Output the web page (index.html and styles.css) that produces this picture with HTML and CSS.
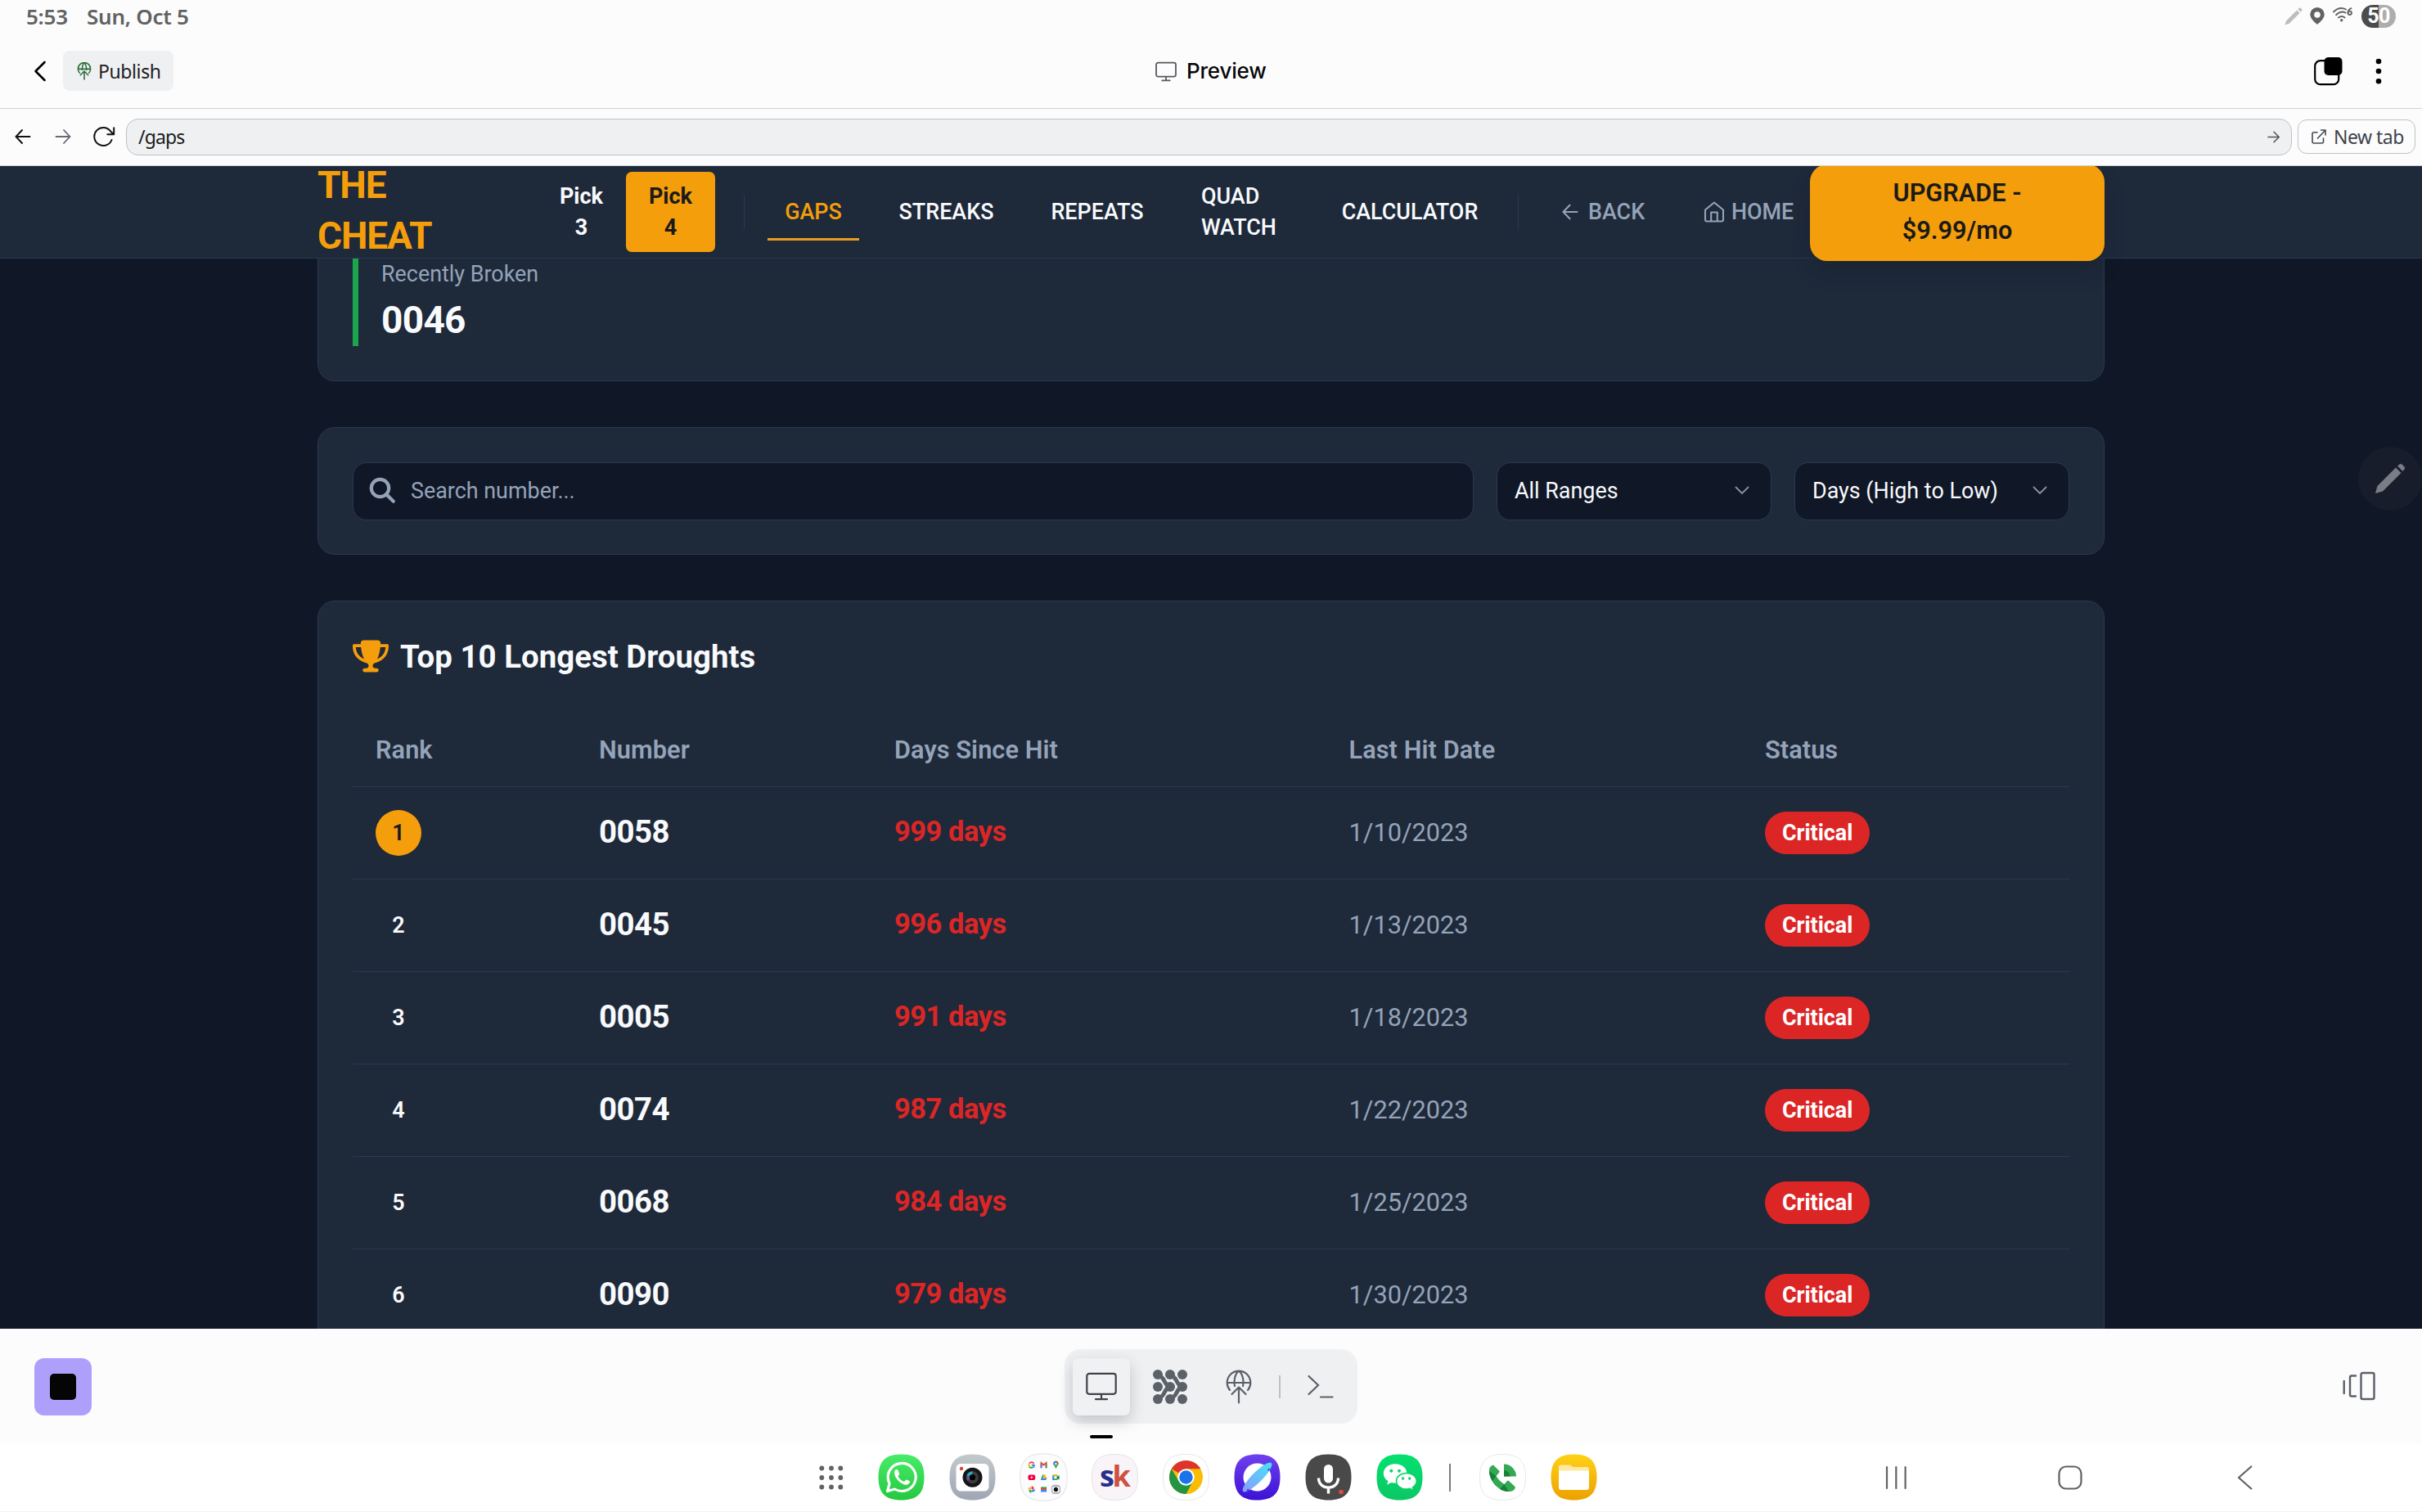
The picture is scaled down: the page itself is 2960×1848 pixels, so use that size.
FILE: index.html
```html
<!DOCTYPE html>
<html lang="en">
<head>
<meta charset="utf-8">
<title>Preview</title>
<link rel="stylesheet" href="styles.css">
</head>
<body>
<div class="screen">
  <div class="browser">
    <div class="status">
      <span class="clock">5:53</span><span class="date">Sun, Oct 5</span>
      <span class="grow"></span>
      <svg class="s-pen" width="22" height="22" viewBox="0 0 22 22"><path d="M0.500 21.500L2 16.500L15 3.500L18.500 7L5.500 20ZM16.300 2.300L18 .7Q19 0 20 1L21 2Q22 3 21 4L19.700 5.700Z" fill="#bdbdbd"/></svg>
      <svg class="s-pin" width="18" height="22" viewBox="0 0 18 22"><path fill-rule="evenodd" d="M9 0a8.700 8.700 0 0 1 8.700 8.600C17.700 14 12 18.500 9 21 6 18.500.3 14 .3 8.600A8.700 8.700 0 0 1 9 0Zm0 5.200a3.800 3.800 0 1 0 0 7.600 3.800 3.800 0 0 0 0-7.600Z" fill="#626262"/></svg>
      <svg class="s-wifi" width="25" height="18" viewBox="0 0 25 18"><g fill="none" stroke="#626262" stroke-width="1.900" stroke-linecap="round"><path d="M1 5.500Q8 -1.500 16 2.500M4 9.200Q10 3.700 15.500 6.500M7 12.500Q11 9.500 14.500 12.500"/><path d="M22.500 1.200Q18.500 3 18.500 6.500"/><circle cx="20.700" cy="6.800" r="2.200"/></g><circle cx="10.700" cy="15.800" r="1.700" fill="#626262"/></svg>
      <span class="battery">50</span>
    </div>
    <div class="titlebar">
      <svg class="back" width="16" height="26" viewBox="0 0 16 26"><path d="M13.500 2L2.500 13L13.500 24" fill="none" stroke="#000" stroke-width="2.600" stroke-linecap="round" stroke-linejoin="round"/></svg>
      <div class="publish">
        <svg width="18" height="22" viewBox="0 0 32 42"><g fill="none" stroke="#2e6e3b" stroke-width="3" stroke-linecap="round" stroke-linejoin="round"><path d="M5 25a14.500 14.500 0 1 1 22 0M2 16h28M11 18c0-8 2-14 5-16 3 2 5 8 5 16M16 22v18M7 30l9-9 9 9"/></g></svg>
        <span>Publish</span>
      </div>
      <div class="heading">
        <svg width="26" height="25" viewBox="0 0 38 35"><g fill="none" stroke="#55575e" stroke-width="2.600" stroke-linecap="round"><rect x="1.500" y="1.500" width="35" height="25" rx="3.500"/><path d="M19 27v6M12 33.500h14"/></g></svg>
        <span>Preview</span>
      </div>
      <span class="grow"></span>
      <svg class="tabs" width="36" height="36" viewBox="0 0 36 36"><rect x="2.200" y="5.200" width="29" height="29" rx="6.500" fill="none" stroke="#000" stroke-width="2.200"/><rect x="13.500" y="1" width="22" height="22" rx="5" fill="#000"/></svg>
      <svg class="kebab" width="8" height="32" viewBox="0 0 8 32"><circle cx="4" cy="4" r="3.300"/><circle cx="4" cy="16" r="3.300"/><circle cx="4" cy="28.300" r="3.300"/></svg>
    </div>
    <div class="address">
      <svg class="a-prev" width="20" height="20" viewBox="0 0 20 20"><path d="M18.500 10H1.800M9 2L1.500 10L9 18" fill="none" stroke="#111" stroke-width="1.900" stroke-linecap="round"/></svg>
      <svg class="a-next" width="20" height="20" viewBox="0 0 20 20"><path d="M1.500 10H18.200M11 2L18.500 10L11 18" fill="none" stroke="#666a70" stroke-width="1.800" stroke-linecap="round"/></svg>
      <svg class="a-reload" width="28" height="26" viewBox="0 0 28 26"><path d="M23.500 17A11 11 0 1 1 22.500 7L26 10M26.200 2.200V10.200H18.300" fill="none" stroke="#111" stroke-width="2" stroke-linecap="round" stroke-linejoin="round"/></svg>
      <div class="url"><span>/gaps</span><svg width="15" height="15" viewBox="0 0 15 15"><path d="M1 7.500H14M8 1.200L14.200 7.500L8 13.800" fill="none" stroke="#50545a" stroke-width="1.500" stroke-linecap="round"/></svg></div>
      <div class="newtab"><svg width="18" height="18" viewBox="0 0 18 18"><path d="M7 3.800H3Q1 3.800 1 5.800V15Q1 17 3 17H12.500Q14.500 17 14.500 15V11M7.500 11L17 1M11.500 1H17V7" fill="none" stroke="#444850" stroke-width="1.600" stroke-linecap="round" stroke-linejoin="round"/></svg><span>New tab</span></div>
    </div>
  </div>

  <div class="page">
    <nav class="nav">
      <div class="nav-inner">
        <div class="logo">THE CHEAT</div>
        <div class="pick">Pick 3</div>
        <div class="pick pick-on">Pick 4</div>
        <i class="rule"></i>
        <a class="link on">GAPS</a>
        <a class="link streaks">STREAKS</a>
        <a class="link repeats">REPEATS</a>
        <a class="link quad">QUAD WATCH</a>
        <a class="link calc">CALCULATOR</a>
        <i class="rule rule-2"></i>
        <a class="mute back-link"><svg width="20" height="20" viewBox="0 0 20 20"><path d="M18.500 10H2M9.500 1.700L1.500 10L9.500 18.300" fill="none" stroke="#94a3b8" stroke-width="2.100" stroke-linecap="round" stroke-linejoin="round"/></svg>BACK</a>
        <a class="mute home-link"><svg width="26" height="26" viewBox="0 0 26 26"><path d="M2 10.500L13 1.500L24 10.500V22.500Q24 24.500 22 24.500H4Q2 24.500 2 22.500ZM9.200 24.500V13.500H16.800V24.500" fill="none" stroke="#94a3b8" stroke-width="2.100" stroke-linejoin="round"/></svg>HOME</a>
        <div class="upgrade">UPGRADE -<br>$9.99/mo</div>
      </div>
    </nav>
    <main class="main">
      <section class="card broken">
        <div class="stat"><div class="stat-label">Recently Broken</div><div class="stat-value">0046</div></div>
      </section>
      <section class="card filters">
        <div class="field search"><svg width="33" height="33" viewBox="0 0 33 33"><g fill="none" stroke="#94a3b8" stroke-width="4.200" stroke-linecap="round"><circle cx="13.500" cy="13.500" r="10.700"/><path d="M21.500 21.500L29.800 29.800"/></g></svg><span>Search number...</span></div>
        <div class="field select"><span class="ranges">All Ranges</span><svg width="18" height="11" viewBox="0 0 18 11"><path d="M1.500 1.500L9 9L16.500 1.500" fill="none" stroke="#8d929e" stroke-width="1.800" stroke-linecap="round"/></svg></div>
        <div class="field select"><span class="days-sort">Days (High to Low)</span><svg width="18" height="11" viewBox="0 0 18 11"><path d="M1.500 1.500L9 9L16.500 1.500" fill="none" stroke="#8d929e" stroke-width="1.800" stroke-linecap="round"/></svg></div>
      </section>
      <section class="card droughts">
        <h2><svg width="44" height="40" viewBox="0 0 576 512"><path fill="#f59e0b" d="M400 0H176c-26.500 0-48.100 21.800-47.100 48.200.2 5.300.4 10.600.7 15.800H24C10.700 64 0 74.700 0 88c0 92.600 33.500 157 78.500 200.700 44.300 43.100 98.300 64.800 138.100 75.800 23.400 6.500 39.400 26 39.400 45.600 0 20.900-17 37.900-37.900 37.900H192c-17.700 0-32 14.300-32 32s14.300 32 32 32h192c17.700 0 32-14.300 32-32s-14.300-32-32-32h-26.100c-20.900 0-37.900-17-37.900-37.900 0-19.600 15.900-39.200 39.400-45.600 39.900-11 93.900-32.700 138.200-75.800C542.500 245 576 180.600 576 88c0-13.300-10.700-24-24-24H446.400c.3-5.200.5-10.400.7-15.800C448.100 21.800 426.500 0 400 0zM48.900 112h84.400c9.100 90.100 29.200 150.300 51.900 190.600-24.900-11-50.800-26.500-73.200-48.300-32-31.100-58-76-63-142.300zm415.200 142.300c-22.400 21.800-48.300 37.300-73.200 48.300 22.700-40.300 42.800-100.500 51.900-190.600h84.400c-5.100 66.300-31.100 111.200-63 142.300z"/></svg><span>Top 10 Longest Droughts</span></h2>
        <div class="row head"><span>Rank</span><span>Number</span><span>Days Since Hit</span><span>Last Hit Date</span><span>Status</span></div>
        <div class="row"><span><b class="rank first">1</b></span><span class="num">0058</span><span class="days">999 days</span><span class="hit">1/10/2023</span><span><b class="pill">Critical</b></span></div>
        <div class="row"><span><b class="rank">2</b></span><span class="num">0045</span><span class="days">996 days</span><span class="hit">1/13/2023</span><span><b class="pill">Critical</b></span></div>
        <div class="row"><span><b class="rank">3</b></span><span class="num">0005</span><span class="days">991 days</span><span class="hit">1/18/2023</span><span><b class="pill">Critical</b></span></div>
        <div class="row"><span><b class="rank">4</b></span><span class="num">0074</span><span class="days">987 days</span><span class="hit">1/22/2023</span><span><b class="pill">Critical</b></span></div>
        <div class="row"><span><b class="rank">5</b></span><span class="num">0068</span><span class="days">984 days</span><span class="hit">1/25/2023</span><span><b class="pill">Critical</b></span></div>
        <div class="row"><span><b class="rank">6</b></span><span class="num">0090</span><span class="days">979 days</span><span class="hit">1/30/2023</span><span><b class="pill">Critical</b></span></div>
      </section>
    </main>
  </div>

  <div class="toolbar">
    <div class="stop"><i></i></div>
    <div class="tools">
      <div class="tool active"><svg width="38" height="35" viewBox="0 0 38 35"><g fill="none" stroke="#3f4249" stroke-width="2.200" stroke-linecap="round"><rect x="1.300" y="1.800" width="35.400" height="25" rx="3"/><path d="M19 27v6M12 33.200h14"/></g></svg></div>
      <div class="tool"><svg width="42" height="42" viewBox="0 0 42 42"><g fill="#5c6068"><circle cx="6" cy="6" r="6"/><circle cx="21" cy="6" r="6"/><circle cx="36" cy="6" r="6"/><circle cx="6" cy="21" r="6"/><circle cx="21" cy="21" r="6"/><circle cx="36" cy="21" r="6"/><circle cx="6" cy="36" r="6"/><circle cx="21" cy="36" r="6"/><circle cx="36" cy="36" r="6"/></g><path d="M8 8C15 9 13 19 21 21C13 23 15 33 8 34M23 8C30 9 28 19 36 21C28 23 30 33 23 34" fill="none" stroke="#5c6068" stroke-width="5"/></svg></div>
      <div class="tool"><svg width="32" height="42" viewBox="0 0 32 42"><g fill="none" stroke="#5c6068" stroke-width="2.200" stroke-linecap="round" stroke-linejoin="round"><path d="M5 25a14.300 14.300 0 1 1 22 0M2 16h28M11 20c-1.500-8 1-16 5-18.300 4 2.300 6.500 10.300 5 18.300M16 21.500v19M7.500 30l8.500-8.500 8.500 8.500"/></g></svg></div>
      <i class="tool-rule"></i>
      <div class="tool"><svg width="32" height="30" viewBox="0 0 32 30"><path d="M1.500 2L13 13L1.500 24M16 27.500H30.500" fill="none" stroke="#5c6068" stroke-width="2.200" stroke-linecap="round"/></svg></div>
      <i class="indicator"></i>
    </div>
    <svg class="flip" width="40" height="36" viewBox="0 0 40 36"><g fill="none" stroke="#5c6068" stroke-width="2.400" stroke-linecap="round" stroke-linejoin="round"><path d="M1.700 12v15M16 5.500H11Q9 5.500 9 7.500V28.500Q9 30.500 11 30.500H16"/><rect x="22.500" y="2" width="16" height="32" rx="2"/></g></svg>
  </div>

  <div class="taskbar">
    <svg class="apps" width="30" height="30" viewBox="0 0 30 30"><g fill="#626262"><circle cx="3.300" cy="3.500" r="2.900"/><circle cx="15" cy="3.500" r="2.900"/><circle cx="26.300" cy="3.500" r="2.900"/><circle cx="3.300" cy="15" r="2.900"/><circle cx="15" cy="15" r="2.900"/><circle cx="26.300" cy="15" r="2.900"/><circle cx="3.300" cy="26.500" r="2.900"/><circle cx="15" cy="26.500" r="2.900"/><circle cx="26.300" cy="26.500" r="2.900"/></g></svg>
    <svg class="app" viewBox="0 0 57 57">
      <defs>
        <path id="sq" d="M28.500.5C48 .5 56.500 9 56.500 28.500S48 56.500 28.500 56.500.5 48 .5 28.500 9 .5 28.500.5Z"/>
        <linearGradient id="wa" x2="0" y2="1"><stop stop-color="#48ec69"/><stop offset="1" stop-color="#26c83f"/></linearGradient>
        <linearGradient id="cam" x2="0" y2="1"><stop stop-color="#c3cacc"/><stop offset="1" stop-color="#9fa5b4"/></linearGradient>
        <linearGradient id="net" x2="0" y2="1"><stop stop-color="#7040ee"/><stop offset="1" stop-color="#3b12d6"/></linearGradient>
        <linearGradient id="ring" x1="1" y1=".5" x2="0" y2=".5"><stop stop-color="#43e3f4"/><stop offset="1" stop-color="#8d9bff"/></linearGradient>
        <linearGradient id="wc" x2="0" y2="1"><stop stop-color="#04e170"/><stop offset="1" stop-color="#0bc765"/></linearGradient>
        <linearGradient id="fil" x2="0" y2="1"><stop stop-color="#ffd118"/><stop offset="1" stop-color="#eca100"/></linearGradient>
      </defs>
      <use href="#sq" fill="url(#wa)"/><path d="M11.500 45.500L14.100 36.200A17 17 0 1 1 20.500 43Z" fill="none" stroke="#fff" stroke-width="3.200" stroke-linejoin="round"/><path d="M20.500 20.500C22 18.500 24 18.800 24.600 20.200L26.200 24.200C26.500 25.500 24.500 26.300 24.500 27.300C26 30.500 28.500 32.500 31.500 33.800C32.700 34 33.800 31.300 35 31.500L38.800 33.300C39.800 34.500 37.500 37.500 35.500 37.800C29.500 38.500 18 29 20.500 20.500Z" fill="#fff"/></svg>
    <svg class="app" viewBox="0 0 57 57"><use href="#sq" fill="url(#cam)"/><rect x="8.500" y="12" width="40" height="33.500" rx="5.500" fill="#fff"/><circle cx="15" cy="18" r="2.200" fill="#e53b35"/><circle cx="28.500" cy="28.700" r="12" fill="#161616"/><circle cx="28.500" cy="28.700" r="7.500" fill="#3d3b42"/><path d="M28.500 28.700L21.500 26.500A7.500 7.500 0 0 1 28.500 21.200Z" fill="#31a5ba"/><path d="M28.500 28.700L22.500 33A7.500 7.500 0 0 1 21.500 26.500Z" fill="#64549d"/><circle cx="28.500" cy="28.700" r="3.600" fill="#000"/></svg>
    <svg class="app folder" viewBox="0 0 57 57"><use href="#sq" fill="#fcfcff" stroke="#e3e3e8"/>
      <g fill="none" stroke-width="1.800"><path d="M16.800 12.200A3 3 0 0 0 11.600 12.200" stroke="#e94335"/><path d="M11.600 12.200A3.200 3.200 0 0 0 11.600 16" stroke="#fbbc04"/><path d="M11.600 16A3 3 0 0 0 16 16.500" stroke="#34a853"/><path d="M14.200 14.200H17.300Q17.300 16 16 16.700" stroke="#4285f4"/><path d="M25.600 17.500V11.500L28.500 14L31.500 11.500V17.500" stroke="#e94335"/><path d="M25.600 17.500V13" stroke="#4285f4"/><path d="M31.500 17.500V13" stroke="#34a853"/></g>
      <path d="M43 18.500Q42 15.500 40 13.500A3.200 3.200 0 1 1 46 13.500Q44 15.500 43 18.500Z" fill="#34a853"/><path d="M40 13.500A3.200 3.200 0 0 1 43 9.500V13Z" fill="#4285f4"/><path d="M43 9.500A3.200 3.200 0 0 1 46 12L43 13Z" fill="#e94335"/><circle cx="43" cy="12.700" r="1.100" fill="#fff"/>
      <rect x="10" y="25.500" width="8.500" height="6.500" rx="2" fill="#f4003c"/><path d="M13.300 27.200L16 28.700L13.300 30.200Z" fill="#fff"/>
      <path d="M27 25.500H30L26.500 32H25Z" fill="#34a853"/><path d="M27.500 25.500H30L32.500 30H29.500Z" fill="#fbbc04"/><path d="M26 29.800H32.500L31 32H25.500Z" fill="#4285f4"/>
      <rect x="39" y="25.500" width="6" height="6.500" rx="1" fill="#34a853"/><path d="M39 27.500L41 25.500H45V27.500Z" fill="#fbbc04"/><path d="M39 27.500H41V32H39Z" fill="#4285f4"/><path d="M44 28.500L47 26V31.500L44 30Z" fill="#188038"/><rect x="41" y="27.500" width="3" height="2.700" fill="#fff"/>
      <path d="M14 39Q17 39 17 42.500H14Z" fill="#e94335"/><path d="M18.500 43Q18.500 46 14.500 46V43Z" fill="#4285f4"/><path d="M14 47Q11 47 11 43.500H14Z" fill="#34a853"/><path d="M10 43Q10 40 13.500 40.500V43Z" fill="#fbbc04"/>
      <path d="M25.200 40H32V42H25.200Z" fill="#34a853"/><path d="M25.200 41.500H32V43.500H25.200Z" fill="#e94335"/><path d="M25.200 43.300H32V46H25.200Z" fill="#4285f4"/>
      <rect x="37.500" y="37.500" width="11" height="11" rx="4" fill="#b0b5bd"/><rect x="39" y="39.800" width="8" height="6.500" rx="1" fill="#fff"/><circle cx="43" cy="43" r="2.600" fill="#111"/></svg>
    <svg class="app" viewBox="0 0 57 57"><use href="#sq" fill="#f8f4f8" stroke="#e6e2e6"/><text x="10" y="40" class="sk" fill="#292f8e">s</text><text x="25.500" y="40" class="sk" fill="#cf513f">k</text></svg>
    <svg class="app" viewBox="0 0 57 57"><use href="#sq" fill="#fff" stroke="#e8e8e8"/><circle cx="28.500" cy="28.500" r="20.500" fill="#fbbc04"/><path d="M28.500 28.500L10.750 18.250A20.500 20.500 0 0 1 46.250 18.250Z" fill="#dd352b"/><path d="M10.750 18.250A20.500 20.500 0 0 0 28.500 49L37 33.500L28.500 28.500L19.500 33Z" fill="#249343"/><path d="M28.500 18.250H46.250L37.500 33.500L28.500 49Q30 49 28.500 49L37.400 33.600Z" fill="#fbbc04"/><circle cx="28.500" cy="28.500" r="10.300" fill="#fff"/><circle cx="28.500" cy="28.500" r="8.200" fill="#1a73e8"/></svg>
    <svg class="app" viewBox="0 0 57 57"><use href="#sq" fill="url(#net)"/><circle cx="28.500" cy="28.500" r="17" fill="#fff"/><ellipse cx="28.500" cy="28.500" rx="24.500" ry="6.300" transform="rotate(-45 28.500 28.500)" fill="url(#ring)"/><path d="M41 19.500Q44.500 16 43.500 18.500L42.500 20.500ZM16.500 43.500Q13.500 46.500 18.500 44L17.500 42.500Z" fill="#3d22c5"/></svg>
    <svg class="app" viewBox="0 0 57 57"><use href="#sq" fill="#494949"/><rect x="23" y="13" width="11" height="22.500" rx="5.500" fill="#fff"/><path d="M16.500 29.500C16.500 45 40.500 45 40.500 29.500M28.500 41V48.500" fill="none" stroke="#fff" stroke-width="3.400"/><circle cx="44" cy="46.500" r="2.800" fill="#e8473e"/></svg>
    <svg class="app" viewBox="0 0 57 57"><use href="#sq" fill="url(#wc)"/><path d="M23 12.300C14.500 12.300 8.800 17.500 8.800 24C8.800 28 11 31 14.500 33.200L13 37.600L18.500 35C31 38 37.500 31 37.500 24.500C37.500 17.500 31.500 12.300 23 12.300Z" fill="#fff"/><path d="M37 23.500C29.500 23.500 24.500 28 24.500 33.300C24.500 38.500 29.500 43 36.500 43Q39 43 41 42.300L45.300 44.500L44.400 40.800C47.500 39 49.200 36.300 49.200 33.300C49.200 28 44.500 23.500 37 23.500Z" fill="#fff" stroke="#07d36a" stroke-width="1.500"/><g fill="#06d56b"><circle cx="18.300" cy="20.700" r="2"/><circle cx="28" cy="20.700" r="2"/><circle cx="32.500" cy="30" r="1.700"/><circle cx="40.700" cy="30" r="1.700"/></g></svg>
    <i class="task-rule"></i>
    <svg class="app" viewBox="0 0 57 57"><use href="#sq" fill="#fff" stroke="#e8e8e8"/><path d="M17 13.500L24.500 21Q25 22 24 23L20.500 27Q24 33 30.500 37L34 33Q35 32 36 33L44 40.500Q43 46 36 46C25 46 12 35 12 20.500Q12 15 17 13.500Z" fill="#34a853"/><path d="M12 21L20.500 27L16 33Q12 27 12 21ZM30.500 37L36 46Q29 46 25 43Z" fill="#188038"/><path d="M30 12.500A15 15 0 0 1 45 27.500H30Z" fill="#34a853"/><path d="M30 20A7.500 7.500 0 0 1 37.500 27.500H30Z" fill="#188038"/></svg>
    <svg class="app" viewBox="0 0 57 57"><use href="#sq" fill="url(#fil)"/><path d="M10 23V16Q10 13.500 12.500 13.500H24L27.500 16H44.500Q47 16 47 18.500V23Z" fill="#ffe8a0"/><path d="M10 20.500H47V41Q47 44 44 44H13Q10 44 10 41Z" fill="#fff"/></svg>
    <span class="grow"></span>
    <svg class="k-recent" width="27" height="30" viewBox="0 0 27 30"><path d="M2 2V28M13.300 2V28M24.600 2V28" stroke="#626262" stroke-width="2.200" stroke-linecap="round"/></svg>
    <svg class="k-home" width="30" height="30" viewBox="0 0 30 30"><rect x="1.500" y="1.500" width="27" height="27" rx="8.500" fill="none" stroke="#626262" stroke-width="2.200"/></svg>
    <svg class="k-back" width="19" height="30" viewBox="0 0 19 30"><path d="M17.300 1.500L2 15L17.300 28.500" fill="none" stroke="#626262" stroke-width="2.200" stroke-linecap="round" stroke-linejoin="round"/></svg>
  </div>

  <div class="float-pen"><svg width="38" height="38" viewBox="0 0 38 38"><path d="M1 37L3.500 28L26 5.500L32.500 12L10 34.500ZM28 3.500L30.500 1.500Q32 .3 33.500 1.500L36.500 4.500Q37.700 6 36.500 7.500L34.500 10Z" fill="#7a7d85"/></svg></div>
</div>
</body>
</html>
```
FILE: styles.css
```css
* { box-sizing: border-box; }
body { margin: 0; font-family: Roboto, "Liberation Sans", sans-serif; }
svg { display: block; flex: none; }
.grow { flex: 1; }
.screen { position: relative; width: 2960px; height: 1848px; overflow: hidden; display: flex; flex-direction: column; background: #fff; }

/* browser chrome */
.browser { position: relative; z-index: 3; height: 203px; flex: none; background: #fcfcfd; border-bottom: 1px solid #cbd0d4; font-family: "Noto Sans", sans-serif; }
.status { height: 42px; display: flex; align-items: center; padding: 0 32px 3px 32px; color: #626262; font: 600 26px/1 "Noto Sans", sans-serif; letter-spacing: -.25px; }
.clock { width: 74px; white-space: nowrap; }
.date { white-space: nowrap; }
.s-pen { margin-right: 9px; }
.s-pin { margin-right: 10px; }
.s-wifi { margin-right: 10px; margin-top: -4px; }
.battery { width: 42px; height: 28px; border-radius: 14px; background: linear-gradient(90deg, #4c4c4c 50%, #adadad 50%); color: #fff; font: 700 25px/27px Roboto, sans-serif; text-align: center; letter-spacing: -.5px; }
.titlebar { position: relative; height: 91px; display: flex; align-items: center; padding: 0 49px 1px 41px; border-bottom: 1px solid #d0d2d4; }
.titlebar .back { margin-right: 20px; }
.publish { width: 135px; height: 49px; border-radius: 8px; background: #eff0f2; display: flex; align-items: center; gap: 8px; padding-left: 17px; color: #1d2026; font-size: 23px; letter-spacing: -.4px; }
.heading { position: absolute; left: 1412px; top: 30px; display: flex; align-items: center; gap: 12px; font: 500 26px/30px Inter, sans-serif; color: #07080a; letter-spacing: -.2px; }
.tabs { margin-right: 40px; }
.address { height: 69px; display: flex; align-items: center; padding: 0 8px 1px 18px; }
.a-prev { margin-right: 29px; }
.a-next { margin-right: 26px; }
.a-reload { margin-right: 13px; }
.url { flex: 1; height: 45px; border: 1px solid #bec2c5; border-radius: 15px; background: #eff0f2; display: flex; align-items: center; justify-content: space-between; padding: 0 14px 0 14px; color: #1a1c20; font-size: 23px; letter-spacing: -.9px; }
.newtab { width: 144px; height: 42px; margin-left: 7px; border: 1px solid #bec2c5; border-radius: 11px; display: flex; align-items: center; gap: 9px; padding-left: 16px; color: #3f434a; font-size: 23px; white-space: nowrap; letter-spacing: -.5px; }

/* page header */
.page { height: 1421px; flex: none; background: #101727; position: relative; display: flex; flex-direction: column; }
.nav { height: 113px; flex: none; background: #1e293a; border-bottom: 1px solid #2b3950; position: relative; z-index: 2; }
.nav-inner { width: 2184px; height: 112px; margin: 0 auto; display: flex; align-items: center; }
.logo { width: 268px; padding-right: 100px; color: #f59e0b; font-size: 46px; font-weight: 700; line-height: 62px; letter-spacing: -1.150px; margin-top: -5px; }
.pick { width: 109px; height: 98px; padding: 11px 24px; text-align: center; color: #f8fafc; font-size: 27px; font-weight: 700; line-height: 38px; }
.pick-on { background: #f59e0b; border-radius: 7px; color: #1a1a1a; }
.rule { width: 1px; height: 42px; margin: 0 28px 0 35px; background: #2b3950; }
.rule-2 { margin: 0 0 0 28px; }
.link { display: block; color: #f8fafc; font-size: 26.900px; font-weight: 500; line-height: 38px; margin-right: 28px; padding: 16px 0 13px; border-bottom: 3px solid transparent; text-align: center; white-space: nowrap; height: 70px; }
.link.on { width: 112px; color: #f59e0b; border-color: #e99c22; }
.streaks { width: 157px; }
.repeats { width: 156px; }
.quad { width: 144px; padding: 1px 0 0 21px; text-align: left; white-space: normal; height: 79px; }
.calc { width: 208px; margin-right: 0; }
.mute { display: flex; align-items: center; color: #94a3b8; font-size: 26.900px; font-weight: 500; white-space: nowrap; line-height: 38px; }
.back-link { width: 172px; padding-left: 53px; gap: 12px; }
.home-link { width: 180px; padding-left: 54px; gap: 8px; }
.upgrade { width: 360px; height: 118px; margin-left: auto; margin-top: 2px; border-radius: 21px; background: #f59e0b; color: #1a1a1a; font-size: 30.700px; font-weight: 600; line-height: 46px; text-align: center; padding-top: 12px; box-shadow: 0 14px 26px -5px rgba(20, 28, 40, .45); flex: none; }

/* cards */
.main { flex: 1; overflow: hidden; width: 2184px; margin: 0 auto; }
.card { background: #1e293a; border: 1px solid #2b3950; border-radius: 21px; padding: 0 42px; }
.broken { height: 150px; border-top: 0; border-radius: 0 0 21px 21px; margin-bottom: 56px; }
.stat { height: 107px; border-left: 7px solid #1ba54c; padding-left: 28px; }
.stat-label { color: #94a3b8; font-size: 26.900px; line-height: 38px; white-space: nowrap; }
.stat-value { color: #f8fafc; font-size: 46px; font-weight: 700; line-height: 62px; margin-top: 6px; letter-spacing: -.7px; }
.filters { height: 156px; display: flex; align-items: center; gap: 28px; margin-bottom: 56px; }
.field { height: 71px; background: #101727; border: 1px solid #2b3950; border-radius: 17px; display: flex; align-items: center; font-size: 26.900px; white-space: nowrap; padding-bottom: 1px; }
.search { flex: 1; padding-left: 19px; gap: 18px; color: #94a3b8; }
.select { width: 336px; padding-left: 21px; padding-right: 26px; justify-content: space-between; color: #f8fafc; }
.droughts { height: 1400px; }
.droughts h2 { margin: 0; height: 135px; padding-bottom: 1px; display: flex; align-items: center; gap: 14px; color: #f8fafc; font-size: 38.400px; font-weight: 700; white-space: nowrap; letter-spacing: .03px; }
.row { height: 113px; border-bottom: 1px solid #2b3950; display: grid; grid-template-columns: 273px 361px 555.500px 508.500px 1fr; align-items: center; }
.row > span { padding-left: 28px; white-space: nowrap; }
.head { height: 92px; color: #94a3b8; font-size: 30.700px; font-weight: 600; letter-spacing: .08px; }
.head > span { padding-top: 2px; }
.rank { width: 56px; height: 56px; border-radius: 50%; display: flex; align-items: center; justify-content: center; color: #f8fafc; font-size: 26.900px; font-weight: 600; }
.first { background: #f59e0b; color: #1a1a1a; }
.row > .num { color: #f8fafc; font-size: 38.400px; font-weight: 700; letter-spacing: -.5px; padding-bottom: 3px; }
.row > .days { color: #dc2626; font-size: 34.500px; font-weight: 700; letter-spacing: -.5px; padding-bottom: 4px; }
.row > .hit { color: #94a3b8; font-size: 30.700px; padding-bottom: 2px; }
.pill { display: inline-block; height: 52px; border-radius: 26px; background: #dc2626; color: #fff; font-size: 26.900px; font-weight: 700; line-height: 52px; padding: 0 21px; }
.row > span:last-child { display: flex; }

/* editor toolbar */
.toolbar { height: 140px; flex: none; background: #fcfcfd; display: flex; align-items: center; justify-content: space-between; padding: 0 57px 0 42px; }
.stop { width: 70px; height: 70px; border-radius: 12px; background: #ae9ffb; display: flex; align-items: center; justify-content: center; margin-top: 2px; }
.stop i { width: 32px; height: 32px; border-radius: 5px; background: #050505; }
.tools { position: relative; width: 358px; height: 91px; border-radius: 20px; background: #eff0f2; display: flex; align-items: center; padding-left: 10px; margin-right: 16px; margin-top: 1px; }
.tool { flex: none; width: 70px; height: 70px; margin-right: 14px; display: flex; align-items: center; justify-content: center; }
.active { background: #f0f1f3; border-radius: 7px; box-shadow: 0 7px 18px rgba(40, 40, 50, .22); }
.tool-rule { flex: none; width: 2px; height: 28px; background: #c0c1c3; margin-right: 14px; }
.indicator { position: absolute; left: 31px; top: 105px; width: 28px; height: 4px; border-radius: 2px; background: #000; }

/* system taskbar */
.taskbar { height: 84px; flex: none; background: #fff; border-bottom: 1px solid #f5f5f5; display: flex; align-items: center; padding-left: 1001px; padding-right: 207px; }
.apps { margin-right: 42px; }
.app { width: 57px; height: 57px; margin-right: 30px; overflow: visible; }
.folder { transform: scale(1.03); }
.sk { font: 700 36px "Open Sans", sans-serif; }
.task-rule { width: 2px; height: 34px; background: #7a7a7a; margin: 0 35px 0 2px; }
.k-recent { margin-right: 184px; }
.k-home { margin-right: 189px; }

.float-pen { position: absolute; z-index: 4; left: 2882px; top: 546px; width: 78px; height: 78px; border-radius: 39px; background: #171d2b; display: flex; align-items: center; justify-content: center; }
```
